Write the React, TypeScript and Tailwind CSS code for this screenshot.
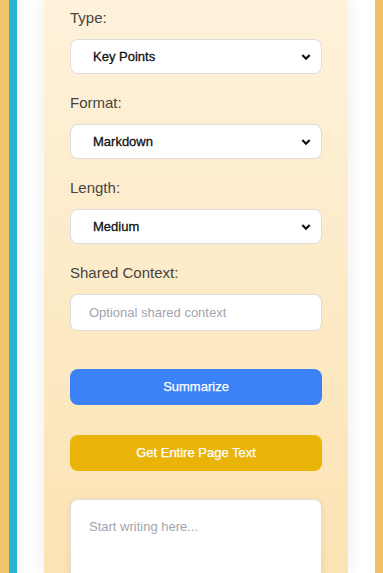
import React, { useState } from "react";

const font = { fontFamily: '"Liberation Sans", Arial, sans-serif' };

const Chevron = () => (
  <svg
    className="pointer-events-none absolute right-[11px] top-1/2 -translate-y-1/2"
    width="10"
    height="7"
    viewBox="0 0 10 7"
  >
    <path d="M1.3 1.5 L5 5.2 L8.7 1.5" fill="none" stroke="#111" strokeWidth="2.2" />
  </svg>
);

interface SelectFieldProps {
  label: string;
  value: string;
  options: string[];
  onChange: (v: string) => void;
}

const SelectField: React.FC<SelectFieldProps> = ({ label, value, options, onChange }) => (
  <div className="mb-[20px]">
    <label className="block text-[15px] leading-[18px] text-[#444] mb-[12px]">{label}</label>
    <div className="relative">
      <select
        value={value}
        onChange={(e) => onChange(e.target.value)}
        className="block w-full h-[35px] appearance-none rounded-lg border border-[#ddd] bg-white pl-[22px] pr-8 text-[13px] text-[#111] outline-none [-webkit-text-stroke:0.3px_#111]"
        style={font}
      >
        {options.map((o) => (
          <option key={o}>{o}</option>
        ))}
      </select>
      <Chevron />
    </div>
  </div>
);

export default function App() {
  const [type, setType] = useState("Key Points");
  const [format, setFormat] = useState("Markdown");
  const [length, setLength] = useState("Medium");

  return (
    <div className="flex h-[573px] overflow-hidden bg-white" style={font}>
      <div className="w-[9px] shrink-0 bg-[#f2c46c]" />
      <div className="w-[8px] shrink-0 bg-[#29b4cf]" />
      <div className="flex-1 px-[27px]">
        <div className="h-full bg-gradient-to-b from-[#fef2db] to-[#fbe3b3] px-[26px] pt-[9px] shadow-[0_0_18px_rgba(0,0,0,0.08)]">
          <SelectField
            label="Type:"
            value={type}
            onChange={setType}
            options={["Key Points", "TL;DR", "Teaser", "Headline"]}
          />
          <SelectField
            label="Format:"
            value={format}
            onChange={setFormat}
            options={["Markdown", "Plain Text"]}
          />
          <SelectField
            label="Length:"
            value={length}
            onChange={setLength}
            options={["Short", "Medium", "Long"]}
          />
          <div>
            <label className="block text-[15px] leading-[18px] text-[#444] mb-[12px]">
              Shared Context:
            </label>
            <input
              placeholder="Optional shared context"
              className="block w-full h-[37px] rounded-lg border border-[#ddd] bg-white px-[18px] text-[13px] text-[#222] placeholder:text-[#a3a3ad] outline-none"
              style={font}
            />
          </div>
          <button className="mt-[38px] block w-full h-[36px] rounded-lg bg-[#3b82f6] text-[13px] text-white [-webkit-text-stroke:0.25px_white]">
            Summarize
          </button>
          <button className="mt-[30px] block w-full h-[36px] rounded-lg bg-[#eab308] text-[13px] text-white [-webkit-text-stroke:0.25px_white]">
            Get Entire Page Text
          </button>
          <textarea
            placeholder="Start writing here..."
            className="mt-[28px] block w-full h-[160px] resize-none rounded-lg border border-[#ddd] bg-white px-[18px] pt-[17px] text-[13px] text-[#222] placeholder:text-[#a3a3ad] shadow-[0_1px_6px_rgba(0,0,0,0.08)] outline-none"
            style={font}
          />
        </div>
      </div>
      <div className="w-[8px] shrink-0 bg-[#efc065]" />
    </div>
  );
}
